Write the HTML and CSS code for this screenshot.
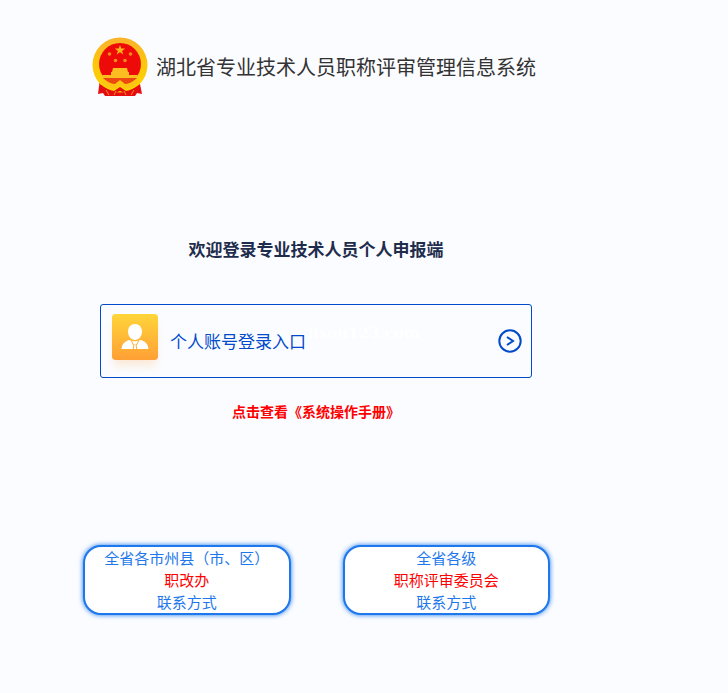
FILE: index.html
```html
<!DOCTYPE html>
<html lang="zh-CN">
<head>
    <meta charset="UTF-8">
    <meta name="viewport" content="width=device-width, initial-scale=1.0">
    <link rel="stylesheet" href="styles.css">
    <title>湖北省专业技术人员职称评审管理信息系统</title>
</head>
<body>
    <header class="header">
        <svg class="emblem" viewBox="0 0 56 60" aria-hidden="true">
            <defs>
                <linearGradient id="gold" x1="0" y1="0" x2="0" y2="1">
                    <stop offset="0" stop-color="#f9b32c"/>
                    <stop offset="0.500" stop-color="#fdc70a"/>
                    <stop offset="1" stop-color="#fdd400"/>
                </linearGradient>
            </defs>
            <path d="M8 42L6 57l5-1 2 3h30l2-3 5 1-3-15z" fill="#e60d12"/>
            <circle cx="28" cy="28" r="27.500" fill="url(#gold)"/>
            <circle cx="28" cy="27" r="21" fill="#ee0a08"/>
            <path d="M28 8l1.300 3.600h3.900l-3.100 2.300 1.200 3.700-3.300-2.300-3.300 2.300 1.200-3.700-3.100-2.300h3.900z" fill="#f9b41a"/>
            <g fill="#f38a1c">
                <circle cx="17.500" cy="17" r="1.800"/>
                <circle cx="38.500" cy="17" r="1.800"/>
                <circle cx="23.500" cy="23.500" r="1.800"/>
                <circle cx="33" cy="23.500" r="1.800"/>
            </g>
            <path d="M21 31h14l1 4h1v3h9l-1 3H11l-1-3h9v-3h1z" fill="#fbbd20"/>
            <path d="M11 41h34l-5 5-7 2-5-4-5 4-7-2z" fill="#ec4a10"/>
            <path d="M12 42q6 5 11 5l5-4 5 4q5 0 11-5l3 3q-5 6-13 7l-6-4-6 4q-8-1-13-7z" fill="#fcc512"/>
            <path d="M9 48q7 5 13 6l6-4 6 4q6-1 13-6l1 5q-7 2-12 4l-8-3-8 3q-5-2-12-4z" fill="#e60d12"/>
            <path d="M14 53l3 5M42 53l-3 5M24 54l-2 4M32 54l2 4" stroke="#f3911c" fill="none"/>
        </svg>
        <h1 class="title">湖北省专业技术人员职称评审管理信息系统</h1>
    </header>

    <main class="main">
        <h2 class="welcome">欢迎登录专业技术人员个人申报端</h2>

        <a class="entry" href="#">
            <svg class="entry-icon" viewBox="0 0 46 46" aria-hidden="true">
                <defs>
                    <linearGradient id="orange" x1="0" y1="0" x2="0" y2="1">
                        <stop offset="0" stop-color="#ffd53a"/>
                        <stop offset="1" stop-color="#ff9f35"/>
                    </linearGradient>
                </defs>
                <rect width="46" height="46" rx="3" fill="url(#orange)"/>
                <path d="M23 10c4 0 7 3 7 7.500S27 26 23 26s-7-4-7-8.500S19 10 23 10z" fill="#fff"/>
                <path d="M17 26q6 2.500 12 0c5 2 7 4 7.500 9h-27c.5-5 2.500-7 7.500-9z" fill="#fff"/>
                <path d="M19.500 27l2 4M26.500 27l-2 4M22 30l-.7 5M24 30l.7 5" stroke="#ffb037" fill="none"/>
            </svg>
            <span class="entry-text">个人账号登录入口</span>
            <span class="watermark" aria-hidden="true">lisou123.com</span>
            <svg class="arrow" viewBox="0 0 24 24" aria-hidden="true">
                <circle cx="12" cy="12" r="10.700"/>
                <path d="M9 8l6 4-6 4"/>
            </svg>
        </a>

        <a class="manual" href="#">点击查看《系统操作手册》</a>
    </main>

    <nav class="contacts">
        <a class="contact" href="#">
            <span>全省各市州县（市、区）</span>
            <span class="red">职改办</span>
            <span>联系方式</span>
        </a>
        <a class="contact" href="#">
            <span>全省各级</span>
            <span class="red">职称评审委员会</span>
            <span>联系方式</span>
        </a>
    </nav>
</body>
</html>
```

FILE: styles.css
```css
* {
    box-sizing: border-box;
}

body {
    margin: 0;
    padding: 37px 178px 24px 83px;
    background-color: #fbfcff;
    font-family: "Noto Sans CJK SC", sans-serif;
}

a {
    text-decoration: none;
}

.header {
    display: flex;
    align-items: center;
    gap: 8px;
    padding-left: 9px;
}

.emblem {
    flex: none;
    width: 56px;
    height: 60px;
}

.title {
    margin: 0;
    font-size: 20px;
    font-weight: 400;
    line-height: 30px;
    color: #333;
}

.main {
    display: flex;
    flex-direction: column;
    align-items: center;
    padding: 138px 18px 0 17px;
}

.welcome {
    margin: 0 0 42px;
    font-size: 17px;
    font-weight: 700;
    line-height: 27px;
    color: #1f2d4d;
}

.entry {
    position: relative;
    display: flex;
    align-items: center;
    gap: 12px;
    width: 100%;
    padding: 9px 9px 17px 11px;
    border: 1px solid #004acb;
    border-radius: 3px;
    color: #004acb;
}

.entry-icon {
    width: 46px;
    height: 46px;
    border-radius: 3px;
    box-shadow: 0 8px 8px -2px rgba(255, 160, 60, 0.2);
}

.entry-text {
    padding-top: 8px;
    font-size: 17px;
    font-weight: 400;
    line-height: 24px;
}

.watermark {
    position: absolute;
    top: 16px;
    left: 48%;
    font-family: "DejaVu Serif", serif;
    font-size: 15px;
    font-weight: 700;
    line-height: 24px;
    color: #fff;
}

.arrow {
    width: 24px;
    height: 24px;
    margin: 8px 0 0 auto;
    fill: none;
    stroke: #004acb;
    stroke-width: 2;
}

.manual {
    margin-top: 23px;
    font-size: 14px;
    font-weight: 700;
    line-height: 20px;
    color: #f00;
}

.contacts {
    display: flex;
    gap: 52px;
    padding-top: 124px;
}

.contact {
    display: flex;
    flex: 1;
    flex-direction: column;
    align-items: center;
    border: 2px solid #1e78eb;
    border-radius: 18px;
    background-color: #fff;
    box-shadow: 0 0 5px #1e78eb;
    font-size: 15px;
    font-weight: 400;
    line-height: 22px;
    color: #1e78eb;
}

.red {
    color: #f00;
}
```
